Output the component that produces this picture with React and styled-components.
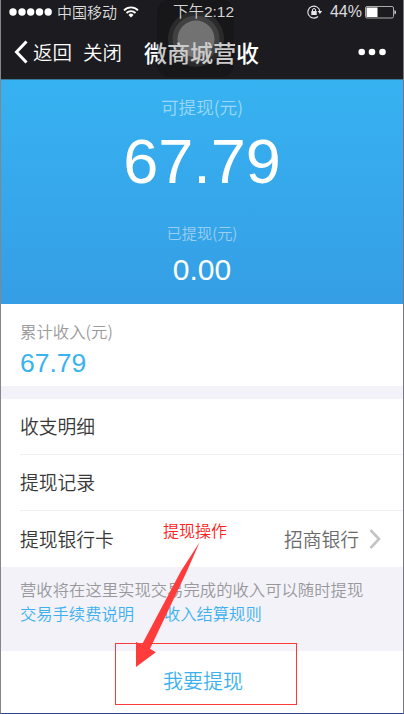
import React from "react";
import styled, { createGlobalStyle } from "styled-components";

const GlobalStyle = createGlobalStyle`
  * {
    box-sizing: border-box;
  }
  body {
    margin: 0;
    background: #fff;
    font-family: "Liberation Sans", "Noto Sans CJK SC", sans-serif;
  }
`;

const Screen = styled.div`
  position: relative;
  display: flex;
  flex-direction: column;
  width: 404px;
  height: 714px;
  overflow: hidden;
  background: #f3f2f8;
  border-left: 1px solid #85858f;
  border-right: 1px solid #77777f;
  border-bottom: 1px solid #2a4a86;
`;

const Top = styled.header`
  position: relative;
  flex: none;
  height: 80px;
  background: #1c1b20;
  border-bottom: 1px solid #397a98;
  color: #fff;
`;

const StatusBar = styled.div`
  position: relative;
  z-index: 2;
  display: grid;
  grid-template-columns: 1fr auto 1fr;
  align-items: center;
  height: 24px;
  padding: 0 6px 0 8px;
`;

const StatusGroup = styled.div`
  display: flex;
  align-items: center;
  justify-content: ${(props) => (props.$end ? "flex-end" : "flex-start")};
`;

const Text = styled.span`
  display: block;
  white-space: nowrap;
  font-size: ${(props) => props.$size}px;
  line-height: ${(props) => props.$line || 24}px;
  color: ${(props) => props.$color || "#fff"};
  font-weight: ${(props) => props.$weight || 350};
  font-family: ${(props) =>
    props.$cjk
      ? '"Noto Sans CJK SC", sans-serif'
      : '"Liberation Sans", "Noto Sans CJK SC", sans-serif'};
`;

const Carrier = styled(Text)`
  margin: 0 6px 0 4px;
`;

const Time = styled(Text)`
  padding-left: 1px;
`;

const Percent = styled(Text)`
  margin: 0 3px 0 7px;
`;

const Dots = styled.svg`
  display: block;
`;

const NavBar = styled.nav`
  position: relative;
  z-index: 1;
  display: flex;
  align-items: center;
  height: 55px;
  padding: 0 17px 0 13px;
`;

const Back = styled.div`
  display: flex;
  align-items: center;
  gap: 5px;
  margin-right: 11px;
`;

const Title = styled.div`
  flex: 1;
  padding-left: 22px;
`;

const AssistiveTouch = styled.svg`
  position: absolute;
  left: 156px;
  top: 0;
  z-index: ${(props) => (props.$over ? 1 : 0)};
`;

const Balance = styled.section`
  display: flex;
  flex: none;
  flex-direction: column;
  align-items: center;
  height: 224px;
  padding-top: 15px;
  background: linear-gradient(#37b2f1, #359ee5);
`;

const Income = styled.section`
  flex: none;
  height: 82px;
  padding: 15px 19px 0;
  margin-bottom: 13px;
  background: #fff;
`;

const List = styled.section`
  flex: none;
  height: 168px;
  padding-left: 19px;
  background: #fff;
`;

const Row = styled.div`
  display: flex;
  align-items: center;
  justify-content: space-between;
  height: 56px;
  padding: 0 22px 1px 0;
  border-bottom: ${(props) => (props.$last ? "none" : "1px solid #efeff1")};
`;

const Value = styled.div`
  display: flex;
  align-items: center;
  gap: 10px;
`;

const Notes = styled.section`
  flex: none;
  height: 84px;
  padding: 10px 19px 0;
`;

const Links = styled.div`
  display: flex;
  gap: 30px;
`;

const Withdraw = styled.button`
  display: flex;
  flex: 1;
  align-items: center;
  justify-content: center;
  padding: 0 0 2px 2px;
  border: none;
  background: #fff;
`;

const Marks = styled.svg`
  position: absolute;
  left: -1px;
  top: 0;
`;

const MarkLabel = styled.div`
  position: absolute;
  left: 162px;
  top: 518px;
`;

const Signal = () => (
  <Dots width="44" height="10">
    {[4, 13, 21.7, 30.5, 39.2].map((x) => (
      <circle key={x} cx={x} cy="5" r="3.7" fill="#fff" />
    ))}
  </Dots>
);

const Wifi = () => (
  <svg width="16" height="12" viewBox="0 0 16 12" fill="none" stroke="#fff">
    <path d="M1 4.3A10 10 0 0 1 15 4.3" strokeWidth="1.8" />
    <path d="M3.5 7A6.3 6.3 0 0 1 12.5 7" strokeWidth="1.8" />
    <path d="M8 11.5L5.5 8.9A3.5 3.5 0 0 1 10.5 8.9Z" fill="#fff" stroke="none" />
  </svg>
);

const RotationLock = () => (
  <svg width="16" height="14" viewBox="0 0 16 14" fill="none" stroke="#e8e8e8">
    <path d="M12.8 6A6 6 0 1 0 11 11.5" strokeWidth="1.1" />
    <path d="M10.6 6H15.2L12.9 9Z" fill="#e8e8e8" stroke="none" />
    <rect x="4.3" y="6" width="5.4" height="4" fill="#e8e8e8" stroke="none" />
    <path d="M5.5 6.5V5A1.5 1.5 0 0 1 8.5 5V6.5" />
  </svg>
);

const Battery = () => (
  <svg width="32" height="13" viewBox="0 0 32 13">
    <rect x="0.5" y="0.5" width="28" height="11.5" rx="1.5" fill="none" stroke="#aaa" />
    <rect x="1.5" y="1.5" width="11" height="9.5" fill="#fff" />
    <path d="M29.5 4V8.5Q31 8 31 6.2T29.5 4" fill="#ddd" />
  </svg>
);

export default function App() {
  return (
    <>
      <GlobalStyle />
      <Screen>
        <Top>
          <AssistiveTouch width="77" height="77">
            <rect width="77" height="77" rx="13" fill="#18171a" />
            <circle cx="39" cy="39" r="28" fill="#303031" />
            <circle cx="39" cy="39" r="23.5" fill="#4e4e4f" />
            <circle cx="39" cy="39" r="18.5" fill="#8c8c8c" />
          </AssistiveTouch>
          <StatusBar>
            <StatusGroup>
              <Signal />
              <Carrier $cjk $size={15} $color="#ddd">中国移动</Carrier>
              <Wifi />
            </StatusGroup>
            <Time $size={15.5} $color="#d4d4d4">下午2:12</Time>
            <StatusGroup $end>
              <RotationLock />
              <Percent $size={16} $color="#ddd">44%</Percent>
              <Battery />
            </StatusGroup>
          </StatusBar>
          <NavBar>
            <Back>
              <svg width="14" height="24" viewBox="0 0 14 24">
                <path d="M12.5 1.5L2.5 12L12.5 22.5" fill="none" stroke="#fff" strokeWidth="3" />
              </svg>
              <Text $cjk $size={19.5}>返回</Text>
            </Back>
            <Text $cjk $size={19.5}>关闭</Text>
            <Title>
              <Text $cjk $size={23} $weight={500}>微商城营收</Text>
            </Title>
            <svg width="28" height="8">
              <circle cx="3.7" cy="4" r="3.3" fill="#fff" />
              <circle cx="14" cy="4" r="3.3" fill="#fff" />
              <circle cx="24.5" cy="4" r="3.3" fill="#fff" />
            </svg>
          </NavBar>
          <AssistiveTouch $over width="77" height="77">
            <rect width="77" height="77" rx="13" fill="#161616" opacity="0.22" />
          </AssistiveTouch>
        </Top>
        <Balance>
          <Text $cjk $size={17.6} $color="#9bd8f8">可提现(元)</Text>
          <Text $size={63} $line={85}>67.79</Text>
          <Text $cjk $size={15.2} $color="#9acff2" $line={57}>已提现(元)</Text>
          <Text $size={30} $line={18}>0.00</Text>
        </Balance>
        <Income>
          <Text $cjk $size={16.4} $color="#9b9b9b">累计收入(元)</Text>
          <Text $size={26.5} $line={41} $color="#3bb2f0">67.79</Text>
        </Income>
        <List>
          <Row>
            <Text $cjk $size={18.8} $color="#383838">收支明细</Text>
          </Row>
          <Row>
            <Text $cjk $size={18.8} $line={26} $color="#383838">提现记录</Text>
          </Row>
          <Row $last>
            <Text $cjk $size={18.8} $color="#383838">提现银行卡</Text>
            <Value>
              <Text $cjk $size={18.8} $color="#6a6a6a">招商银行</Text>
              <svg width="12" height="20" viewBox="0 0 12 20">
                <path d="M1.5 1L10 10L1.5 19" fill="none" stroke="#c4c4c6" strokeWidth="2.6" />
              </svg>
            </Value>
          </Row>
        </List>
        <Notes>
          <Text $cjk $size={16.35} $color="#98989c">
            营收将在这里实现交易完成的收入可以随时提现
          </Text>
          <Links>
            <Text $cjk $size={16.3} $color="#3db1f0">交易手续费说明</Text>
            <Text $cjk $size={16.3} $color="#3db1f0">收入结算规则</Text>
          </Links>
        </Notes>
        <Withdraw>
          <Text $cjk $size={20} $color="#3db1f0">我要提现</Text>
        </Withdraw>
        <Marks width="404" height="714">
          <rect x="115.5" y="643.5" width="181" height="61" fill="none" stroke="#f93b3b" />
          <path d="M199.7 542L181 571L142 644.5L136 642V667L155.8 652.3L150 648.7L187 571Z" fill="#ff3b3b" />
        </Marks>
        <MarkLabel>
          <Text $cjk $size={16} $color="#ff2020">提现操作</Text>
        </MarkLabel>
      </Screen>
    </>
  );
}
